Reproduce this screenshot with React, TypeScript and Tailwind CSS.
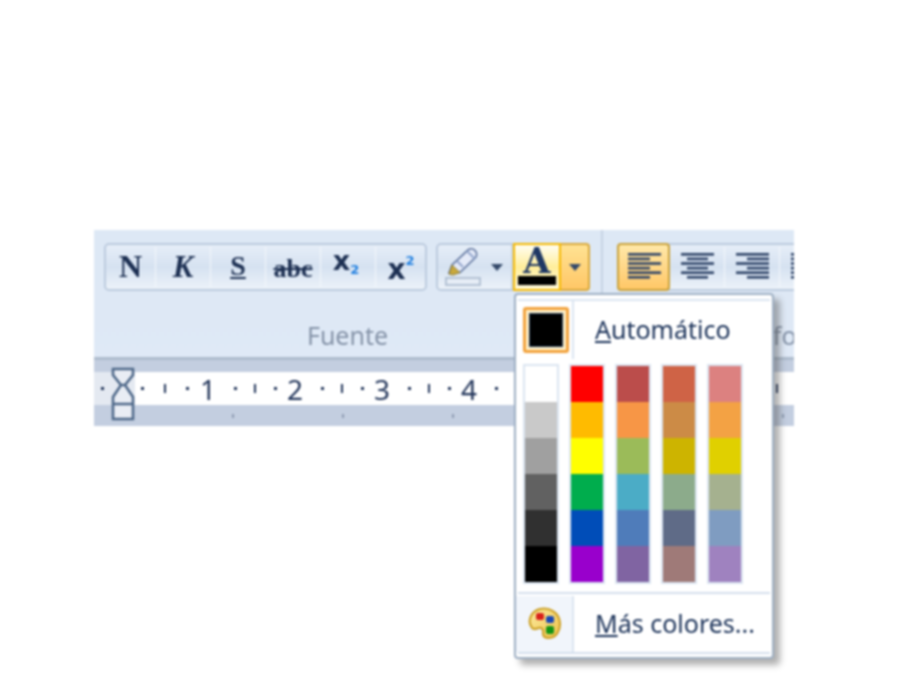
const uiFont = "font-['Noto_Sans',sans-serif]";

const swatchCols = [
  ['#ffffff', '#c9c9c9', '#a0a0a0', '#616161', '#303030', '#000000'],
  ['#ff0000', '#ffbb00', '#ffff00', '#00ad4d', '#004db8', '#9900cc'],
  ['#bb4d4b', '#f79646', '#9bbb59', '#4bacc6', '#4f7cba', '#8064a2'],
  ['#cf6346', '#cc8b46', '#cdb400', '#8cab8b', '#5f6b87', '#9f7a78'],
  ['#dc8180', '#f3a244', '#e0d000', '#a5b18f', '#7f9cc1', '#9f82bf'],
];

function Divider() {
  return <div className="w-px h-[40px] bg-[#c5d3e5] border-r border-[#f3f7fb]" />;
}

function FormatButton({ children, last, first }: { children: React.ReactNode; last?: boolean; first?: boolean }) {
  return (
    <div className="flex items-center h-full">
      <div className={`${first ? 'w-[49px]' : 'w-[54px]'} flex items-center justify-center`}>{children}</div>
      {!last && <Divider />}
    </div>
  );
}

function AlignIcon({ lines }: { lines: [number, number][] }) {
  return (
    <svg width="36" height="30" viewBox="0 0 36 30">
      {lines.map(([x, w], i) => (
        <rect key={i} x={x} y={1 + i * 4.6} width={w} height="2.6" fill="#2f4468" />
      ))}
    </svg>
  );
}

function Caret() {
  return (
    <svg width="12" height="7" viewBox="0 0 12 7">
      <path d="M0 0h12L6 7z" fill="#34496a" />
    </svg>
  );
}

function Highlighter() {
  return (
    <svg width="36" height="38" viewBox="0 0 36 38">
      <path d="M4 25l3-8L23 2c2-1.500 5-1.500 7 .5s2 5 .5 7L15 24.500z" fill="#e4eaf8" stroke="#61769f" strokeWidth="1.700" />
      <path d="M7 17l8 7.500-7 2.500-4-1z" fill="#c9a93c" stroke="#8d7f3e" strokeWidth="1" />
      <path d="M22 3l8 8M12 13l6 6" stroke="#93a7cd" strokeWidth="2" />
      <rect x="1" y="30" width="34" height="7" fill="#e6edf6" stroke="#aebdd1" strokeWidth="1.800" />
    </svg>
  );
}

function Palette() {
  return (
    <svg width="36" height="36" viewBox="0 0 36 36" className="ml-[2px]">
      <defs>
        <linearGradient id="paletteFill" x1="0" y1="0" x2="1" y2="1">
          <stop offset="0" stopColor="#fbeaa0" />
          <stop offset="1" stopColor="#eec24a" />
        </linearGradient>
      </defs>
      <path
        d="M13 3c9-2 19 3 20 14 .5 8-4 15-11 15-4 0-6-1-6-4s1-5-2-6-6 3-9 0C2 18 2 14 4 10c2-4 5-6 9-7z"
        fill="url(#paletteFill)"
        stroke="#cc9f22"
        strokeWidth="2"
      />
      <rect x="9" y="7" width="8" height="7" rx="2" fill="#d8201a" />
      <rect x="19" y="10" width="8" height="7" rx="2" fill="#1a48b4" />
      <rect x="19" y="20" width="8" height="8" rx="2" fill="#149414" />
    </svg>
  );
}

function RulerInch({ label }: { label: string }) {
  return (
    <div className="w-[87px] shrink-0 flex items-center justify-between pr-[10px] text-[#22355a]">
      <span className="w-[16px] text-center text-[28px] leading-none">{label}</span>
      <span className="w-[3px] h-[3px] bg-[#22355a]" />
      <span className="w-[2px] h-[9px] bg-[#22355a]" />
      <span className="w-[3px] h-[3px] bg-[#22355a]" />
    </div>
  );
}

export default function App() {
  return (
    <div className={`w-[900px] h-[700px] bg-white overflow-hidden pt-[230px] pl-[94px] blur-[0.8px] ${uiFont}`}>
      <div className="relative w-[700px]">
        <div className="w-[700px] h-[196px] overflow-hidden flex flex-col">
          {/* Ribbon */}
          <div className="h-[127px] shrink-0 flex bg-gradient-to-b from-[#dde8f5] to-[#dfe9f6]">
            <div className="w-[509px] shrink-0 flex flex-col border-r-2 border-[#c6d3e4]">
              <div className="flex gap-[9px] pl-[10px] pt-[13px]">
                <div className="h-[48px] w-[323px] flex items-center rounded-[5px] border-2 border-[#bccbde] bg-gradient-to-b from-[#e6eef8] via-[#d6e2f1] to-[#ecf2f9] text-[#1c2f52]">
                  <FormatButton first>
                    <span className="font-['Liberation_Serif',serif] font-bold text-[32px] leading-none -mt-[2px]">N</span>
                  </FormatButton>
                  <FormatButton>
                    <span className="font-['Liberation_Serif',serif] font-bold italic text-[31px] leading-none -mt-[2px]">K</span>
                  </FormatButton>
                  <FormatButton>
                    <span className="font-['Liberation_Serif',serif] font-bold text-[28px] leading-none underline -mt-[2px]">S</span>
                  </FormatButton>
                  <FormatButton>
                    <span className="font-['Liberation_Serif',serif] font-bold text-[26px] leading-none line-through mt-1">abc</span>
                  </FormatButton>
                  <FormatButton>
                    <span className="font-['DejaVu_Sans',sans-serif] font-bold text-[27px] leading-none -mt-3 -ml-1">
                      x<span className="text-[13px] text-[#1f7fe0] align-[-4px]">2</span>
                    </span>
                  </FormatButton>
                  <FormatButton last>
                    <span className="font-['DejaVu_Sans',sans-serif] font-bold text-[28px] leading-none mt-1 -ml-1">
                      x<span className="text-[13px] text-[#1f7fe0] align-[14px]">2</span>
                    </span>
                  </FormatButton>
                </div>
                <div className="h-[48px] w-[154px] flex rounded-[5px] border-2 border-[#bccbde] bg-gradient-to-b from-[#e6eef8] via-[#d6e2f1] to-[#ecf2f9]">
                  <div className="w-[75px] flex items-center gap-[10px] pl-[7px] border-r-2 border-[#c9d6e6]">
                    <Highlighter />
                    <Caret />
                  </div>
                  <div className="-my-[2px] w-[49px] flex flex-col items-center border-2 border-[#f5b800] bg-gradient-to-b from-[#fffdf0] via-[#ffee9a] to-[#fff8d8]">
                    <span className="font-['DejaVu_Serif',serif] font-bold text-[35px] leading-[31px] text-[#1f3864]">A</span>
                    <span className="w-[38px] h-[9px] bg-black" />
                  </div>
                  <div className="-my-[2px] -mr-[2px] w-[29px] flex items-center justify-center rounded-r-[4px] border-2 border-l-0 border-[#d9a93c] bg-gradient-to-b from-[#ffe293] to-[#ffc766]">
                    <Caret />
                  </div>
                </div>
              </div>
              <div className="mt-[29px] text-center text-[25px] leading-[30px] text-[#8593a8]">Fuente</div>
            </div>
            <div className="w-[300px] shrink-0 flex flex-col">
              <div className="flex pl-[14px] pt-[13px]">
                <div className="h-[48px] w-[400px] flex items-center rounded-[5px] border-2 border-[#bccbde] bg-gradient-to-b from-[#e6eef8] via-[#d6e2f1] to-[#ecf2f9]">
                  <div className="-my-[2px] -ml-[2px] h-[48px] w-[53px] flex items-center justify-center rounded-[4px] border-2 border-[#c9a23c] bg-gradient-to-b from-[#ffe8a8] to-[#ffc766]">
                    <AlignIcon lines={[[2, 33], [2, 22], [2, 33], [2, 22], [2, 33], [2, 22]]} />
                  </div>
                  <FormatButton>
                    <AlignIcon lines={[[2, 33], [8, 21], [2, 33], [8, 21], [2, 33], [8, 21]]} />
                  </FormatButton>
                  <FormatButton>
                    <AlignIcon lines={[[2, 33], [13, 22], [2, 33], [13, 22], [2, 33], [13, 22]]} />
                  </FormatButton>
                  <FormatButton last>
                    <AlignIcon lines={[[2, 33], [2, 33], [2, 33], [2, 33], [2, 33], [2, 33]]} />
                  </FormatButton>
                </div>
              </div>
              <div className="mt-[29px] text-center text-[25px] leading-[30px] text-[#8593a8]">Párrafo</div>
            </div>
          </div>

          <div className="h-[3px] shrink-0 bg-[#aebccd]" />

          {/* Ruler */}
          <div className="flex-1 flex flex-col bg-[#c3cee0]">
            <div className="h-[12px] shrink-0" />
            <div className="h-[33px] shrink-0 flex items-center bg-white">
              <div className="w-[41px] h-full shrink-0 bg-[#e4e9f1] flex items-center pl-[7px]">
                <span className="w-[3px] h-[3px] bg-[#22355a]" />
              </div>
              <div className="flex items-center justify-between w-[65px] shrink-0 pl-[6px] pr-[11px]">
                <span className="w-[3px] h-[3px] bg-[#22355a]" />
                <span className="w-[2px] h-[9px] bg-[#22355a]" />
                <span className="w-[3px] h-[3px] bg-[#22355a]" />
              </div>
              <RulerInch label="1" />
              <RulerInch label="2" />
              <RulerInch label="3" />
              <RulerInch label="4" />
              <RulerInch label="5" />
              <RulerInch label="6" />
              <RulerInch label="7" />
            </div>
            <div className="flex-1 flex items-center pl-[30px]">
              {[0, 1, 2, 3, 4, 5].map((i) => (
                <div key={i} className="w-[110px] shrink-0 flex justify-end">
                  <span className="w-[2px] h-[4px] bg-[#8f9db3]" />
                </div>
              ))}
            </div>
          </div>
        </div>

        {/* Indent marker */}
        <svg className="absolute left-[17px] top-[137px]" width="24" height="55" viewBox="0 0 24 55">
          <path d="M2 2h20v6L14 18h-4L2 8zM10 18h4l8 12v22H2V30z" fill="#e9edf4" stroke="#4d6788" strokeWidth="2.500" />
          <path d="M2 37h20" stroke="#4d6788" strokeWidth="2.500" />
        </svg>

        {/* Colour menu */}
        <div className="absolute left-[420px] top-[63px] w-[260px] h-[366px] rounded-[4px] border-2 border-[#9fb0c4] bg-white shadow-[6px_6px_6px_rgba(80,80,80,0.45)] flex flex-col">
          <div className="h-[4px] border-b-2 border-[#dbe5f1] mx-[2px] mt-[2px] shrink-0" />
          <div className="h-[58px] shrink-0 flex items-center">
            <div className="w-[58px] h-full shrink-0 flex items-center pl-[7px] border-r-2 border-[#dbe5f1]">
              <div className="w-[46px] h-[46px] rounded-[3px] border-[3px] border-[#f2a23c] bg-[#fff0c8] p-[3px]">
                <div className="w-full h-full bg-black border border-[#29415f]" />
              </div>
            </div>
            <span className="ml-[21px] text-[25px] text-[#1a3158]">
              <span className="underline">A</span>utomático
            </span>
          </div>
          <div className="mt-[5px] flex gap-[10px] pl-[7px]">
            {swatchCols.map((col, i) => (
              <div key={i} className="w-[36px] border-2 border-[#dbe5f1] flex flex-col">
                {col.map((c) => (
                  <div key={c} className="h-[36px]" style={{ backgroundColor: c }} />
                ))}
              </div>
            ))}
          </div>
          <div className="mt-[8px] h-[2px] mx-[2px] bg-[#d4dfed] shrink-0" />
          <div className="mt-[2px] h-[56px] shrink-0 flex items-center">
            <div className="w-[58px] h-full shrink-0 flex items-center justify-center bg-[#f1f5fb] border-r-2 border-[#dbe5f1]">
              <Palette />
            </div>
            <span className="ml-[21px] text-[25px] text-[#1a3158]">
              <span className="underline">M</span>ás colores...
            </span>
          </div>
          <div className="h-[2px] mx-[2px] bg-[#d4dfed] shrink-0" />
        </div>
      </div>
    </div>
  );
}
